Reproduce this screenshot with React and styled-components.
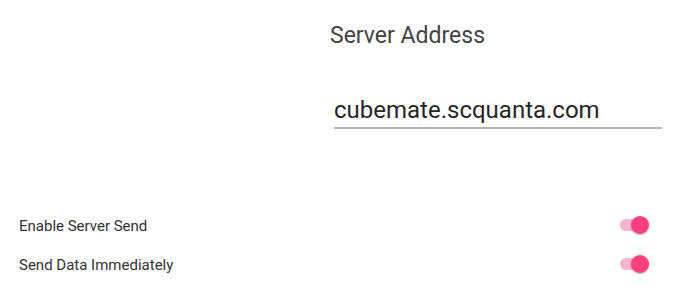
import React from "react";
import styled, { createGlobalStyle } from "styled-components";

const GlobalStyle = createGlobalStyle`
  html, body {
    margin: 0;
    padding: 0;
    background: #ffffff;
  }
  body {
    font-family: Roboto, "Noto Sans", "Liberation Sans", sans-serif;
  }
`;

const toggles = [
  { label: "Enable Server Send", on: true },
  { label: "Send Data Immediately", on: true },
];

export default function App() {
  return (
    <>
      <GlobalStyle />
      <Page>
        <AddressSection>
          <Field>
            <FieldLabel>Server Address</FieldLabel>
            <AddressInput defaultValue="cubemate.scquanta.com" spellCheck={false} />
          </Field>
        </AddressSection>
        <ToggleList>
          {toggles.map((t) => (
            <ToggleRow key={t.label}>
              <ToggleLabel>{t.label}</ToggleLabel>
              <Switch $on={t.on}>
                <Track $on={t.on} />
                <Thumb $on={t.on} />
              </Switch>
            </ToggleRow>
          ))}
        </ToggleList>
      </Page>
    </>
  );
}

// Styled Components ............

const Page = styled.div`
  width: 696px;
  height: 297px;
  background: #ffffff;
  display: flex;
  flex-direction: column;
  overflow: hidden;
`;

const AddressSection = styled.div`
  display: flex;
  justify-content: flex-end;
  padding: 22px 34px 0 0;
`;

const Field = styled.div`
  width: 332px;
  display: flex;
  flex-direction: column;
`;

const FieldLabel = styled.div`
  font-size: 23px;
  line-height: 28px;
  color: #424242;
`;

const AddressInput = styled.input`
  margin: 45px 0 0 4px;
  padding: 1px 0 3px 0;
  border: none;
  border-bottom: 2px solid #b3b3b3;
  outline: none;
  background: transparent;
  font-family: Roboto, "Noto Sans", "Liberation Sans", sans-serif;
  font-size: 24px;
  line-height: 28px;
  height: 28px;
  color: #262626;
`;

const ToggleList = styled.div`
  display: flex;
  flex-direction: column;
  margin-top: 77px;
`;

const ToggleRow = styled.div`
  height: 39px;
  display: flex;
  align-items: center;
  justify-content: space-between;
  padding: 0 47px 0 19px;
`;

const ToggleLabel = styled.span`
  font-size: 15px;
  color: #333333;
`;

const Switch = styled.div`
  position: relative;
  width: 29px;
  height: 18px;
  margin-top: -2px;
`;

const Track = styled.div`
  position: absolute;
  left: 0;
  top: 3px;
  width: 26px;
  height: 12px;
  border-radius: 6px;
  background: ${(p) => (p.$on ? "#f9b3cc" : "#bdbdbd")};
`;

const Thumb = styled.div`
  position: absolute;
  top: 0;
  left: ${(p) => (p.$on ? "11px" : "0")};
  width: 18px;
  height: 18px;
  border-radius: 50%;
  background: ${(p) => (p.$on ? "#ff3f80" : "#f1f1f1")};
  box-shadow: 0 1px 2px rgba(0, 0, 0, 0.3);
`;
